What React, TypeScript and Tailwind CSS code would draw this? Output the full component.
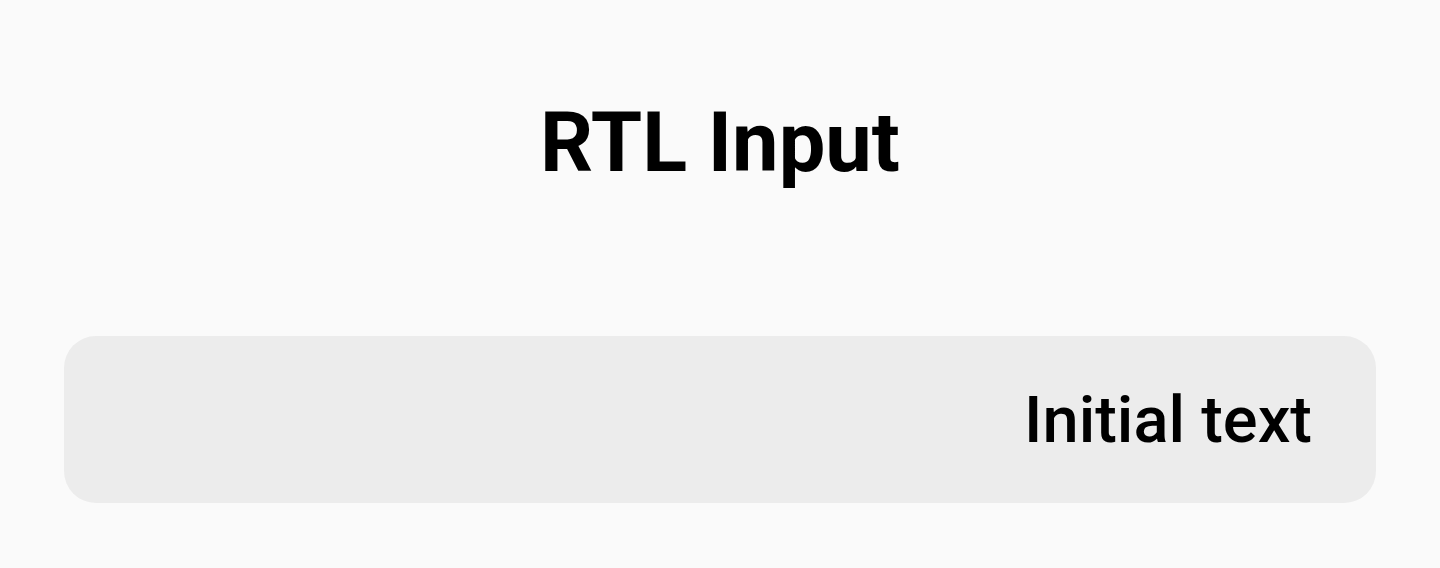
export default function App() {
  return (
    <div
      className="min-h-screen bg-[#fafafa] px-16 pt-[101px] text-black"
      style={{ fontFamily: 'Roboto, "Noto Sans", sans-serif' }}
    >
      <h1 className="text-center text-[83px] leading-[83px] font-bold">RTL Input</h1>
      <div className="mt-[152px] flex h-[167px] items-center rounded-[32px] bg-[#ececec] px-16">
        <input
          dir="rtl"
          defaultValue="Initial text"
          className="w-full bg-transparent text-[65px] leading-[80px] font-medium outline-none"
        />
      </div>
    </div>
  );
}
